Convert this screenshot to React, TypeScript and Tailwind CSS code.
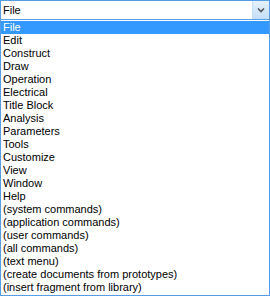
import React from "react";

const items = [
  "File","Edit","Construct","Draw","Operation","Electrical","Title Block","Analysis","Parameters","Tools","Customize","View","Window","Help","(system commands)","(application commands)","(user commands)","(all commands)","(text menu)","(create documents from prototypes)","(insert fragment from library)",
];

export default function App() {
  return (
    <div className="w-[270px] h-[296px] bg-white text-black text-[11px] leading-[13px]" style={{ fontFamily: '"Liberation Sans", Arial, sans-serif' }}>
      <div className="h-[20px] flex border border-[#569de5] bg-white">
        <div className="flex-1 flex items-center pl-[2px]">File</div>
        <div className="w-[17px] flex items-center justify-center bg-gradient-to-b from-[#e5f1fb] to-[#c4dff8] border-l border-[#c4dff8]">
          <svg width="8" height="6" viewBox="0 0 8 6">
            <path d="M1 1.5 L4 4.5 L7 1.5" stroke="#555" strokeWidth="1.6" fill="none" />
          </svg>
        </div>
      </div>
      <div className="h-[276px] border border-t-0 border-[#569de5] pt-[1px] flex flex-col">
        {items.map((t, i) => (
          <div key={i} className={`h-[13px] pl-[2px] whitespace-nowrap ${i === 0 ? "bg-[#3399ff] text-white" : ""}`}>{t}</div>
        ))}
      </div>
    </div>
  );
}
